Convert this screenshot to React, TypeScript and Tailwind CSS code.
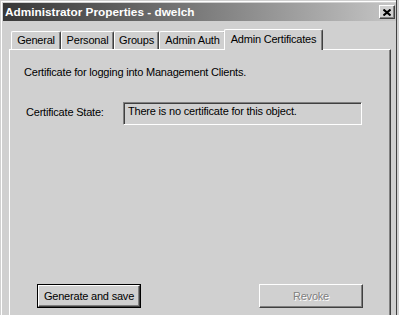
const tabs = [
  { label: "General", width: "w-[50px]" },
  { label: "Personal", width: "w-[53px]" },
  { label: "Groups", width: "w-[45px]" },
  { label: "Admin Auth", width: "w-[67px]" },
];

export default function App() {
  return (
    <div className="w-[399px] h-[315px] overflow-hidden bg-[#d0d0d0] font-['Liberation_Sans',Arial,sans-serif] text-[11px] tracking-[-0.2px] leading-[13px] text-black">
      <div className="w-[397px] h-full border-r border-[#404040] pl-px pt-px">
        <div className="h-full border-l border-t border-white pl-px pt-px">
          {/* title bar */}
          <div className="h-[18px] flex items-center justify-between bg-gradient-to-r from-[#383838] to-[#c6c6c6] pl-[2px] pr-px">
            <span className="text-white font-bold text-[11.8px] tracking-normal leading-[14px]">
              Administrator Properties - dwelch
            </span>
            <div className="w-[16px] h-[14px] bg-[#d0d0d0] border-t border-l border-white border-r border-b border-r-[#404040] border-b-[#404040] shadow-[inset_-1px_-1px_0_#808080] flex items-center justify-center">
              <svg width="8" height="7" viewBox="0 0 8 7" className="mr-px">
                <path d="M0.5 0.5 L7.5 6.5 M7.5 0.5 L0.5 6.5" stroke="#000" strokeWidth="2" />
              </svg>
            </div>
          </div>

          {/* tabs */}
          <div className="mt-[8px] ml-[6px] h-[20px] flex items-end pl-[2px]">
            {tabs.map((t) => (
              <div
                key={t.label}
                className={`${t.width} h-[18px] flex items-center justify-center border-l border-t border-white border-r border-r-[#404040] rounded-t-[2px] shadow-[inset_-1px_0_0_#808080]`}
              >
                {t.label}
              </div>
            ))}
            <div className="relative z-10 -ml-[2px] -mb-px w-[99px] h-[21px] flex items-start justify-center pt-[3px] bg-[#d0d0d0] border-l border-t border-white border-r border-r-[#404040] rounded-t-[2px] shadow-[inset_-1px_0_0_#808080]">
              Admin Certificates
            </div>
          </div>

          {/* panel */}
          <div className="ml-[6px] w-[382px] h-[300px] border-l border-t border-white border-r border-r-[#404040] shadow-[inset_-1px_0_0_#808080] pl-[14px] pt-[16px]">
            <p>Certificate for logging into Management Clients.</p>

            <div className="mt-[23px] flex items-start">
              <span className="ml-[2px] w-[97px] mt-[4px]">Certificate State:</span>
              <div className="w-[239px] h-[23px] border-t border-l border-[#808080] border-b border-r border-b-white border-r-white">
                <div className="h-full border-t border-l border-[#404040] pl-[3px] pt-[1px]">
                  There is no certificate for this object.
                </div>
              </div>
            </div>

            <div className="mt-[159px] ml-[13px] flex">
              <div className="w-[104px] h-[24px] border border-black">
                <div className="h-full flex items-center justify-center border-t border-l border-white border-r border-b border-r-[#404040] border-b-[#404040] shadow-[inset_-1px_-1px_0_#808080]">
                  Generate and save
                </div>
              </div>
              <div className="ml-[118px] w-[104px] h-[24px] flex items-center justify-center border-t border-l border-white border-r border-b border-r-[#404040] border-b-[#404040] shadow-[inset_-1px_-1px_0_#808080] text-[#808080] [text-shadow:1px_1px_0_#ffffff]">
                Revoke
              </div>
            </div>
          </div>
        </div>
      </div>
    </div>
  );
}
